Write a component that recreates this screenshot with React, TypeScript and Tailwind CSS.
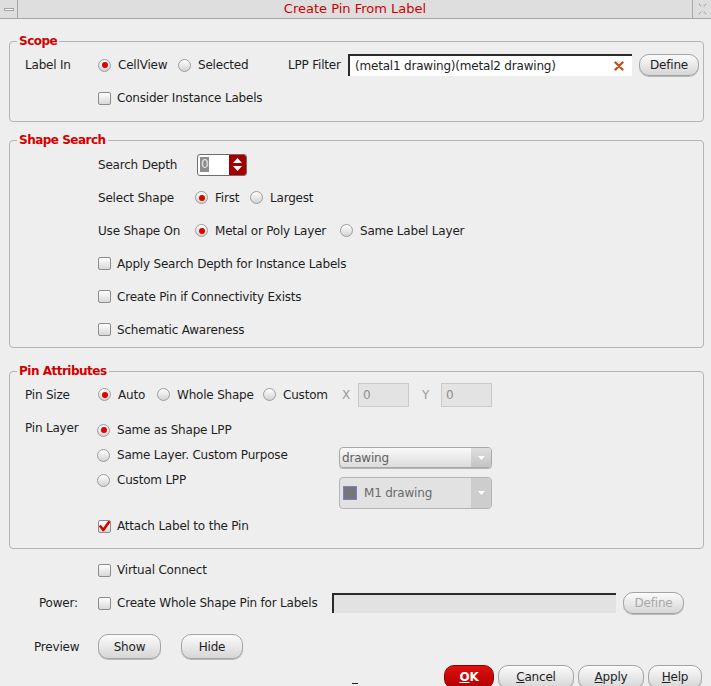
import React from "react";

const Radio = ({ checked }: { checked?: boolean }) => (
  <span className="inline-flex h-[13px] w-[13px] shrink-0 items-center justify-center rounded-full border border-[#9c9c9c] bg-linear-to-b from-white to-[#d2d2d2]">
    {checked && <span className="h-[6px] w-[6px] rounded-full bg-[#e00000]" />}
  </span>
);

const Check = ({ checked }: { checked?: boolean }) => (
  <span className="inline-flex h-[13px] w-[13px] shrink-0 items-center justify-center rounded-[2px] border border-[#8c8c8c] bg-linear-to-b from-white to-[#d8d8d8]">
    {checked && (
      <svg width="11" height="11" viewBox="0 0 11 11">
        <path d="M1.5 5.5 L4.3 9 L9.8 1.2" stroke="#d40000" strokeWidth="2.6" fill="none" strokeLinecap="round" strokeLinejoin="round" />
      </svg>
    )}
  </span>
);

const Opt = ({ checked, label, className }: { checked?: boolean; label: string; className?: string }) => (
  <div className={"flex items-center gap-[7px] " + (className ?? "")}>
    <Radio checked={checked} />
    <span className="whitespace-nowrap">{label}</span>
  </div>
);

const CheckRow = ({ checked, label }: { checked?: boolean; label: string }) => (
  <div className="flex items-center gap-[6px]">
    <Check checked={checked} />
    <span className="whitespace-nowrap">{label}</span>
  </div>
);

const Btn = ({ children, className, disabled }: { children: React.ReactNode; className?: string; disabled?: boolean }) => (
  <div
    className={
      "flex items-center justify-center rounded-[10px] border border-[#a4a4a4] bg-linear-to-b from-[#fbfbfb] to-[#d6d6d6] shadow-[0_1px_0_#b8b8b8] " +
      (disabled ? "text-[#a8a8a8] " : "text-[#1e1e1e] ") +
      (className ?? "")
    }
  >
    {children}
  </div>
);

const Legend = ({ children }: { children: React.ReactNode }) => (
  <legend className="ml-[7px] px-[2px] text-[12px] font-bold leading-[14px] tracking-[-0.5px] text-[#d20000]">{children}</legend>
);

export default function App() {
  return (
    <div className="relative h-[686px] w-[711px] overflow-hidden bg-[#eeeeee] font-['DejaVu_Sans',sans-serif] text-[12px] leading-[14px] tracking-[-0.2px] text-[#1e1e1e]">
      {/* Title bar */}
      <div className="flex h-[19px] border-b border-[#a6a6a6] bg-[#dedede]">
        <div className="flex w-[18px] items-center justify-center border-r border-[#a6a6a6]">
          <span className="h-[3px] w-[10px] border border-[#a0a0a0] bg-white" />
        </div>
        <div className="flex flex-1 items-center justify-center text-[13px] tracking-normal text-[#d00000]">Create Pin From Label</div>
        <div className="flex w-[19px] items-center justify-center border-l border-[#a6a6a6]">
          <svg width="11" height="12" viewBox="0 0 11 12">
            <path d="M2 1 L5 4 M9 1 L6 4 M2 11 L5 8 M9 11 L6 8" stroke="#9a9a9a" strokeWidth="1.2" strokeDasharray="1 1" fill="none" />
          </svg>
        </div>
      </div>

      {/* Scope */}
      <fieldset className="ml-[9px] mr-[7px] mt-[15px] rounded-[4px] border border-[#b4b4b4] pb-[13px] pt-[6px]">
        <Legend>Scope</Legend>
        <div className="flex h-[22px] items-center pl-[15px]">
          <span className="w-[73px]">Label In</span>
          <Opt checked label="CellView" className="w-[80px]" />
          <Opt label="Selected" className="w-[110px]" />
          <span className="w-[60px] whitespace-nowrap">LPP Filter</span>
          <div className="flex h-[22px] w-[284px] items-center justify-between border-l-2 border-t-2 border-[#2a2a2a] bg-white pl-[5px] pr-[8px]">
            <span className="whitespace-nowrap">(metal1 drawing)(metal2 drawing)</span>
            <svg width="10" height="10" viewBox="0 0 10 10">
              <path d="M1.5 1.5 L8.5 8.5 M8.5 1.5 L1.5 8.5" stroke="#c0501e" strokeWidth="2.4" strokeLinecap="round" />
            </svg>
          </div>
          <Btn className="ml-[7px] h-[22px] w-[60px]">Define</Btn>
        </div>
        <div className="mt-[12px] flex h-[20px] items-center pl-[88px]">
          <CheckRow label="Consider Instance Labels" />
        </div>
      </fieldset>

      {/* Shape Search */}
      <fieldset className="ml-[9px] mr-[7px] mt-[11px] rounded-[4px] border border-[#b4b4b4] pb-[1px] pt-[1px]">
        <Legend>Shape Search</Legend>
        <div className="flex h-[33px] items-center pl-[88px]">
          <span className="w-[99px]">Search Depth</span>
          <div className="flex h-[22px] w-[50px] overflow-hidden rounded-[3px] border border-[#6e6e6e] bg-white">
            <div className="flex flex-1 items-center pl-[2px]">
              <span className="bg-[#8c8c8c] px-[1px] leading-[15px] text-[#e6e6e6]">0</span>
            </div>
            <div className="flex w-[17px] flex-col items-center justify-center gap-[3px] bg-[#a40000]">
              <svg width="9" height="5" viewBox="0 0 9 5"><path d="M0 5 L4.5 0 L9 5 Z" fill="#fff" /></svg>
              <svg width="9" height="5" viewBox="0 0 9 5"><path d="M0 0 L4.5 5 L9 0 Z" fill="#fff" /></svg>
            </div>
          </div>
        </div>
        <div className="flex h-[33px] items-center pl-[88px]">
          <span className="w-[97px]">Select Shape</span>
          <Opt checked label="First" className="w-[55px]" />
          <Opt label="Largest" />
        </div>
        <div className="flex h-[33px] items-center pl-[88px]">
          <span className="w-[97px]">Use Shape On</span>
          <Opt checked label="Metal or Poly Layer" className="w-[145px]" />
          <Opt label="Same Label Layer" />
        </div>
        <div className="flex h-[33px] items-center pl-[88px]">
          <CheckRow label="Apply Search Depth for Instance Labels" />
        </div>
        <div className="flex h-[33px] items-center pl-[88px]">
          <CheckRow label="Create Pin if Connectivity Exists" />
        </div>
        <div className="flex h-[33px] items-center pl-[88px]">
          <CheckRow label="Schematic Awareness" />
        </div>
      </fieldset>

      {/* Pin Attributes */}
      <fieldset className="ml-[9px] mr-[7px] mt-[16px] rounded-[4px] border border-[#b4b4b4] pb-[9px]">
        <Legend>Pin Attributes</Legend>
        <div className="flex h-[33px] items-center pl-[15px]">
          <span className="w-[73px]">Pin Size</span>
          <Opt checked label="Auto" className="w-[59px]" />
          <Opt label="Whole Shape" className="w-[106px]" />
          <Opt label="Custom" className="w-[79px]" />
          <span className="w-[16px] text-[#9a9a9a]">X</span>
          <div className="flex h-[24px] w-[51px] items-center border border-[#cacaca] bg-[#e3e3e3] pl-[4px] text-[#8e8e8e]">0</div>
          <span className="ml-[13px] w-[19px] text-[#9a9a9a]">Y</span>
          <div className="flex h-[24px] w-[51px] items-center border border-[#cacaca] bg-[#e3e3e3] pl-[4px] text-[#8e8e8e]">0</div>
        </div>
        <div className="flex pl-[15px]">
          <div className="w-[72px] pt-[10px]">Pin Layer</div>
          <div className="flex w-[242px] flex-col pt-[6px]">
            <div className="flex h-[26px] items-center">
              <Opt checked label="Same as Shape LPP" />
            </div>
            <div className="flex h-[24px] items-center">
              <Opt label="Same Layer. Custom Purpose" />
            </div>
            <div className="flex h-[26px] items-center">
              <Opt label="Custom LPP" />
            </div>
          </div>
          <div className="flex flex-col pt-[36px]">
            <div className="flex h-[21px] w-[153px] overflow-hidden rounded-[4px] border border-[#a8a8a8] bg-linear-to-b from-[#f9f9f9] to-[#dcdcdc] shadow-[0_1px_0_#b4b4b4]">
              <span className="flex flex-1 items-center pl-[2px] text-[#606060]">drawing</span>
              <span className="flex w-[20px] items-center justify-center bg-linear-to-b from-[#dedede] to-[#c4c4c4]">
                <svg width="7" height="4" viewBox="0 0 7 4"><path d="M0 0 L3.5 4 L7 0 Z" fill="#fff" /></svg>
              </span>
            </div>
            <div className="mt-[9px] flex h-[32px] w-[153px] overflow-hidden rounded-[4px] border border-[#b4b4b4] bg-[#e2e2e2]">
              <span className="flex flex-1 items-center gap-[7px] pl-[3px] text-[#6a6a6a]">
                <span className="h-[14px] w-[14px] border border-[#7a7ae0] bg-[#767676]" />
                M1 drawing
              </span>
              <span className="flex w-[20px] items-center justify-center bg-[#cdcdcd]">
                <svg width="7" height="4" viewBox="0 0 7 4"><path d="M0 0 L3.5 4 L7 0 Z" fill="#fff" /></svg>
              </span>
            </div>
          </div>
        </div>
        <div className="mt-[4px] flex h-[26px] items-center pl-[88px]">
          <CheckRow checked label="Attach Label to the Pin" />
        </div>
      </fieldset>

      {/* Bottom area */}
      <div className="mt-[11px] flex h-[20px] items-center pl-[98px]">
        <CheckRow label="Virtual Connect" />
      </div>
      <div className="mt-[11px] flex h-[24px] items-center pl-[39px]">
        <span className="w-[59px]">Power:</span>
        <div className="w-[234px]">
          <CheckRow label="Create Whole Shape Pin for Labels" />
        </div>
        <div className="h-[20px] w-[284px] border-l-2 border-t-2 border-[#2a2a2a] bg-[#e2e2e2]" />
        <Btn disabled className="ml-[7px] h-[22px] w-[61px]">Define</Btn>
      </div>
      <div className="mt-[19px] flex h-[25px] items-center pl-[34px]">
        <span className="w-[64px]">Preview</span>
        <Btn className="h-[25px] w-[63px]">Show</Btn>
        <Btn className="ml-[20px] h-[25px] w-[62px]">Hide</Btn>
      </div>
      <div className="mt-[6px] flex justify-end gap-[4px] pr-[9px]">
        <div className="flex h-[24px] w-[50px] items-center justify-center rounded-[10px] border border-[#8a0000] bg-linear-to-b from-[#e01010] to-[#b00000] font-bold text-white">
          <span><span className="underline">O</span>K</span>
        </div>
        <Btn className="h-[24px] w-[76px]"><span><span className="underline">C</span>ancel</span></Btn>
        <Btn className="h-[24px] w-[66px]"><span><span className="underline">A</span>pply</span></Btn>
        <Btn className="h-[24px] w-[54px]"><span><span className="underline">H</span>elp</span></Btn>
      </div>
      <div className="absolute left-[352px] top-[683px] h-[1px] w-[6px] bg-[#222]" />
    </div>
  );
}
